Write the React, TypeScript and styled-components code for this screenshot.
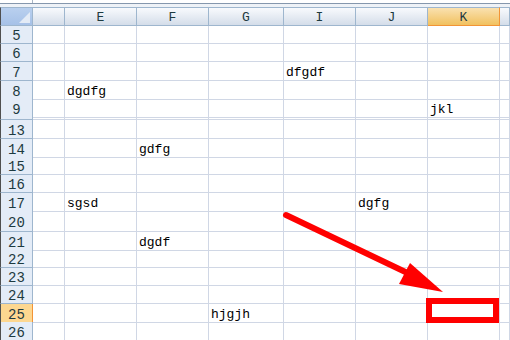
import React from 'react';
import styled, {createGlobalStyle, css} from 'styled-components';

const GlobalStyle = createGlobalStyle`
  html, body {
    margin: 0;
    padding: 0;
    background: #fff;
    overflow: hidden;
  }
`;

const COLS = ['D', 'E', 'F', 'G', 'I', 'J', 'K', 'L'];
const TEMPLATE = '33px 32px 72px 72px 75px 72px 72px 72px 1fr';

interface RowData {
  num: string;
  height: number;
  cells?: Record<string, string>;
}

const rows: RowData[] = [
  {num: '5', height: 18},
  {num: '6', height: 18},
  {num: '7', height: 19, cells: {I: 'dfgdf'}},
  {num: '8', height: 18, cells: {E: 'dgdfg'}},
  {num: '9', height: 17, cells: {K: 'jkl'}},
  {num: '', height: 4},
  {num: '13', height: 19},
  {num: '14', height: 18, cells: {F: 'gdfg'}},
  {num: '15', height: 18},
  {num: '16', height: 18},
  {num: '17', height: 18, cells: {E: 'sgsd', J: 'dgfg'}},
  {num: '20', height: 21},
  {num: '21', height: 18, cells: {F: 'dgdf'}},
  {num: '22', height: 18},
  {num: '23', height: 18},
  {num: '24', height: 18},
  {num: '25', height: 18, cells: {G: 'hjgjh'}},
  {num: '26', height: 19},
];

const ACTIVE_ROW = '25';
const ACTIVE_COL = 'K';

export default function App() {
  return (
    <Page>
      <GlobalStyle />
      <TopStrip>
        <NameBoxEdge />
      </TopStrip>
      <Sheet>
        <Row $height={19}>
          <Corner />
          {COLS.map((c) => (
            <ColHeader key={c} $active={c === ACTIVE_COL}>
              {c === 'D' || c === 'L' ? '' : c}
            </ColHeader>
          ))}
        </Row>
        {rows.map((r, i) => (
          <Row key={i} $height={r.height}>
            <RowHeader $active={r.num === ACTIVE_ROW}>{r.num}</RowHeader>
            {COLS.map((c) => (
              <Cell key={c}>{r.cells?.[c] ?? ''}</Cell>
            ))}
          </Row>
        ))}
      </Sheet>
      <Overlay width="510" height="340" viewBox="0 0 510 340">
        <line x1="286" y1="215" x2="418" y2="278" stroke="#ff0000" strokeWidth="6" strokeLinecap="round" />
        <polygon points="443,292 410,263 399,284" fill="#ff0000" />
        <rect x="429" y="301" width="67" height="19" fill="none" stroke="#ff0000" strokeWidth="6" />
      </Overlay>
    </Page>
  );
}

const Page = styled.div`
  position: relative;
  width: 510px;
  height: 340px;
  overflow: hidden;
  font-family: 'Liberation Mono', 'DejaVu Sans Mono', monospace;
`;

const TopStrip = styled.div`
  height: 7px;
  box-sizing: border-box;
  background: linear-gradient(#fff 0, #fff 3px, #8597ad 3px, #8597ad 4px, #eef2f7 4px);
  display: flex;
`;

const NameBoxEdge = styled.div`
  width: 33px;
  height: 3px;
  box-sizing: border-box;
  border-right: 1px solid #a9b6c6;
`;

const Sheet = styled.div`
  display: flex;
  flex-direction: column;
`;

const Row = styled.div<{$height: number}>`
  display: grid;
  grid-template-columns: ${TEMPLATE};
  height: ${(p) => p.$height}px;
`;

const Corner = styled.div`
  position: relative;
  box-sizing: border-box;
  border-left: 1px solid #4f4f4f;
  border-top: 1px solid #9eb6ce;
  border-right: 1px solid #9eb6ce;
  border-bottom: 1px solid #9eb6ce;
  background: linear-gradient(#b9d0ef, #a6c1e7);

  &::after {
    content: '';
    position: absolute;
    right: 2px;
    bottom: 2px;
    width: 11px;
    height: 11px;
    background: #e3ebf6;
    clip-path: polygon(100% 0, 100% 100%, 0 100%);
  }
`;

const headerText = css`
  box-sizing: border-box;
  display: flex;
  align-items: center;
  justify-content: center;
  font-size: 13px;
  color: #1d3a40;
`;

const ColHeader = styled.div<{$active?: boolean}>`
  ${headerText};
  padding-top: 2px;
  border-top: 1px solid #9eb6ce;
  border-right: 1px solid ${(p) => (p.$active ? '#f29436' : '#9eb6ce')};
  border-bottom: 1px solid ${(p) => (p.$active ? '#f29436' : '#9eb6ce')};
  background: ${(p) =>
    p.$active ? 'linear-gradient(#fae1b0, #f1c15f)' : 'linear-gradient(#f8fafd, #d4dde9)'};
`;

const RowHeader = styled.div<{$active?: boolean}>`
  ${headerText};
  font-size: 14px;
  border-left: 1px solid #4f4f4f;
  border-right: 1px solid ${(p) => (p.$active ? '#f29436' : '#9eb6ce')};
  border-bottom: 1px solid ${(p) => (p.$active ? '#f29436' : '#9eb6ce')};
  background: ${(p) => (p.$active ? '#fdd790' : '#e4ecf7')};
  padding-top: 3px;
  overflow: hidden;
`;

const Cell = styled.div`
  box-sizing: border-box;
  border-right: 1px solid #d0d7e5;
  border-bottom: 1px solid #d0d7e5;
  display: flex;
  align-items: center;
  padding: 3px 0 0 2px;
  font-size: 13px;
  color: #000;
  white-space: nowrap;
`;

const Overlay = styled.svg`
  position: absolute;
  left: 0;
  top: 0;
  pointer-events: none;
`;
